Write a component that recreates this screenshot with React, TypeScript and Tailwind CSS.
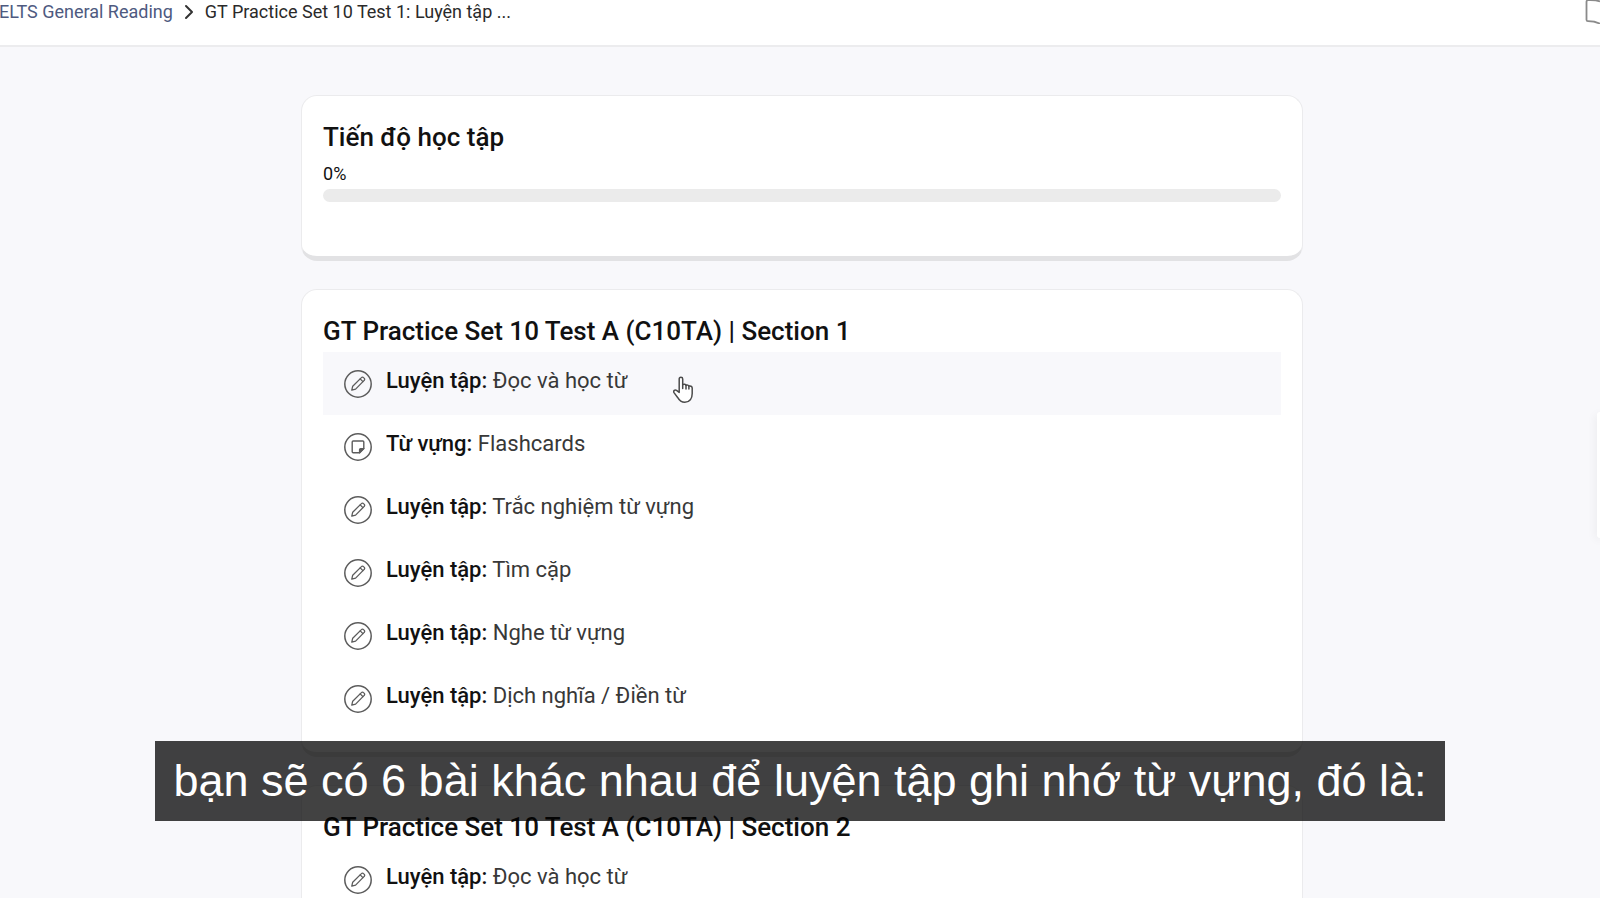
import { ChevronRight } from 'lucide-react';

interface Lesson {
  kind: string;
  title: string;
  icon: 'pencil' | 'note';
}

const lessons: Lesson[] = [
  { kind: 'Luyện tập:', title: 'Đọc và học từ', icon: 'pencil' },
  { kind: 'Từ vựng:', title: 'Flashcards', icon: 'note' },
  { kind: 'Luyện tập:', title: 'Trắc nghiệm từ vựng', icon: 'pencil' },
  { kind: 'Luyện tập:', title: 'Tìm cặp', icon: 'pencil' },
  { kind: 'Luyện tập:', title: 'Nghe từ vựng', icon: 'pencil' },
  { kind: 'Luyện tập:', title: 'Dịch nghĩa / Điền từ', icon: 'pencil' },
];

const sections = [
  { name: 'GT Practice Set 10 Test A (C10TA) | Section 1', active: 0 },
  { name: 'GT Practice Set 10 Test A (C10TA) | Section 2', active: -1 },
];

const cardClass = 'rounded-2xl border border-b-[5px] border-[#ebebed] border-b-[#e2e2e4] bg-white px-[21px] pt-[25px]';

function LessonIcon({ icon }: { icon: Lesson['icon'] }) {
  return (
    <svg viewBox="0 0 28 28" className="h-7 w-7 shrink-0" fill="none" stroke="#5c5c5c" strokeLinecap="round" strokeLinejoin="round" aria-hidden="true">
      <circle cx="14" cy="14" r="13.2" strokeWidth="1.5" />
      {icon === 'pencil' ? (
        <g strokeWidth="1.3">
          <path d="M7.8 20.2l.9-4L17.4 7.600a1.500 1.500 0 0 1 2.200 0l.6.6a1.500 1.500 0 0 1 0 2.200l-8.600 8.700z" />
          <path d="M16.200 8.900l2.700 2.700" />
        </g>
      ) : (
        <g strokeWidth="1.4">
          <path d="M9.2 8h9.600a1 1 0 0 1 1 1v6.600l-4.200 4.200H9.200a1 1 0 0 1-1-1V9a1 1 0 0 1 1-1z" />
          <path d="M19.800 15.600h-3.200a1 1 0 0 0-1 1v3.200z" fill="#5c5c5c" />
        </g>
      )}
    </svg>
  );
}

function HandCursor() {
  return (
    <svg viewBox="0 0 20 28" className="absolute top-6 left-[350px] h-7 w-5" fill="#fff" stroke="#4a4a4a" strokeWidth="1.5" strokeLinecap="round" strokeLinejoin="round" aria-hidden="true">
      <path d="M6.200 16.400V3a1.700 1.700 0 0 1 3.500 0v5.600c1.300-.7 2.900-.4 3.300.7 1.200-.5 2.500-.2 2.900.8 1.400-.4 3.300.2 3.300 1.900v5.600c0 5-2.500 8.700-7.400 8.700-3.600 0-5.400-1.600-7-4.600L1 16.600c-.9-1.800.9-3.300 2.500-2.200z" />
      <path d="M9.700 8.600v4M13 9.300v3.600M15.900 10.100v3" />
    </svg>
  );
}

export default function App() {
  const progress = 0;

  return (
    <div className="relative h-screen overflow-hidden bg-[#f8f8fb] font-['Roboto',sans-serif] text-[#111]">
      <header className="flex h-[47px] justify-between border-b-2 border-[#ececee] bg-white">
        <nav className="-ml-[6px] flex h-6 items-center text-[18px] leading-6 whitespace-nowrap" aria-label="Breadcrumb">
          <a href="#reading" className="text-[#4e5a80]">IELTS General Reading</a>
          <ChevronRight className="mx-1 h-6 w-6 text-[#333]" strokeWidth={2} />
          <span className="text-[#2a2a2a]">GT Practice Set 10 Test 1: Luyện tập ...</span>
        </nav>
        <button type="button" aria-label="Menu" className="h-6 w-4 overflow-hidden">
          <svg viewBox="0 0 16 24" className="h-6 w-4" fill="none" stroke="#8a8a8a" strokeWidth="1.8">
            <path d="M16 1.500C12.500.2 8.500 0 4 .2A1.500 1.500 0 0 0 2.500 1.700v18a1.500 1.500 0 0 0 1.500 1.500c4.500 0 8.500.8 12 2.600" />
          </svg>
        </button>
      </header>

      <main className="mx-auto flex w-full max-w-[1006px] flex-col gap-7 pt-12 pl-1">
        <section className={`${cardClass} pb-[54px]`}>
          <h2 className="text-[26px] leading-8 font-medium">Tiến độ học tập</h2>
          <div id="progress-label" className="mt-[9px] mb-[3px] text-[18px] leading-6">{progress}%</div>
          <div className="h-[13px] overflow-hidden rounded-full bg-[#ebebeb]" role="progressbar" aria-labelledby="progress-label" aria-valuenow={progress}>
            <div className="h-full bg-blue-500" style={{ width: `${progress}%` }} />
          </div>
        </section>

        {sections.map((section) => (
          <section key={section.name} className={`${cardClass} pb-[22px]`}>
            <h2 className="text-[26px] leading-8 font-medium">{section.name}</h2>
            <ul className="mt-[5px]">
              {lessons.map((lesson, i) => (
                <li key={lesson.title} className="relative">
                  <a
                    href="#lesson"
                    className={`flex h-[63px] items-center gap-[14px] px-[21px] text-[22px] leading-7 ${i === section.active ? 'bg-[#f8f8fb]' : ''}`}
                  >
                    <LessonIcon icon={lesson.icon} />
                    <span className="pb-[5px] text-[#383838]">
                      <strong className="font-medium text-[#111]">{lesson.kind}</strong> {lesson.title}
                    </span>
                  </a>
                  {i === section.active && <HandCursor />}
                </li>
              ))}
            </ul>
          </section>
        ))}
      </main>

      {/* floating side panel, mostly off screen */}
      <aside className="absolute top-[412px] right-0 h-[126px] w-[3px] rounded-l bg-white shadow-[0_2px_10px_rgba(0,0,0,0.12)]" />

      {/* caption */}
      <div className="absolute inset-x-0 bottom-[77px] flex justify-center">
        <p className="bg-black/74 px-[18px] font-['Liberation_Sans',sans-serif] text-[45px] leading-[80px] whitespace-nowrap text-white">
          bạn sẽ có 6 bài khác nhau để luyện tập ghi nhớ từ vựng, đó là:
        </p>
      </div>
    </div>
  );
}
